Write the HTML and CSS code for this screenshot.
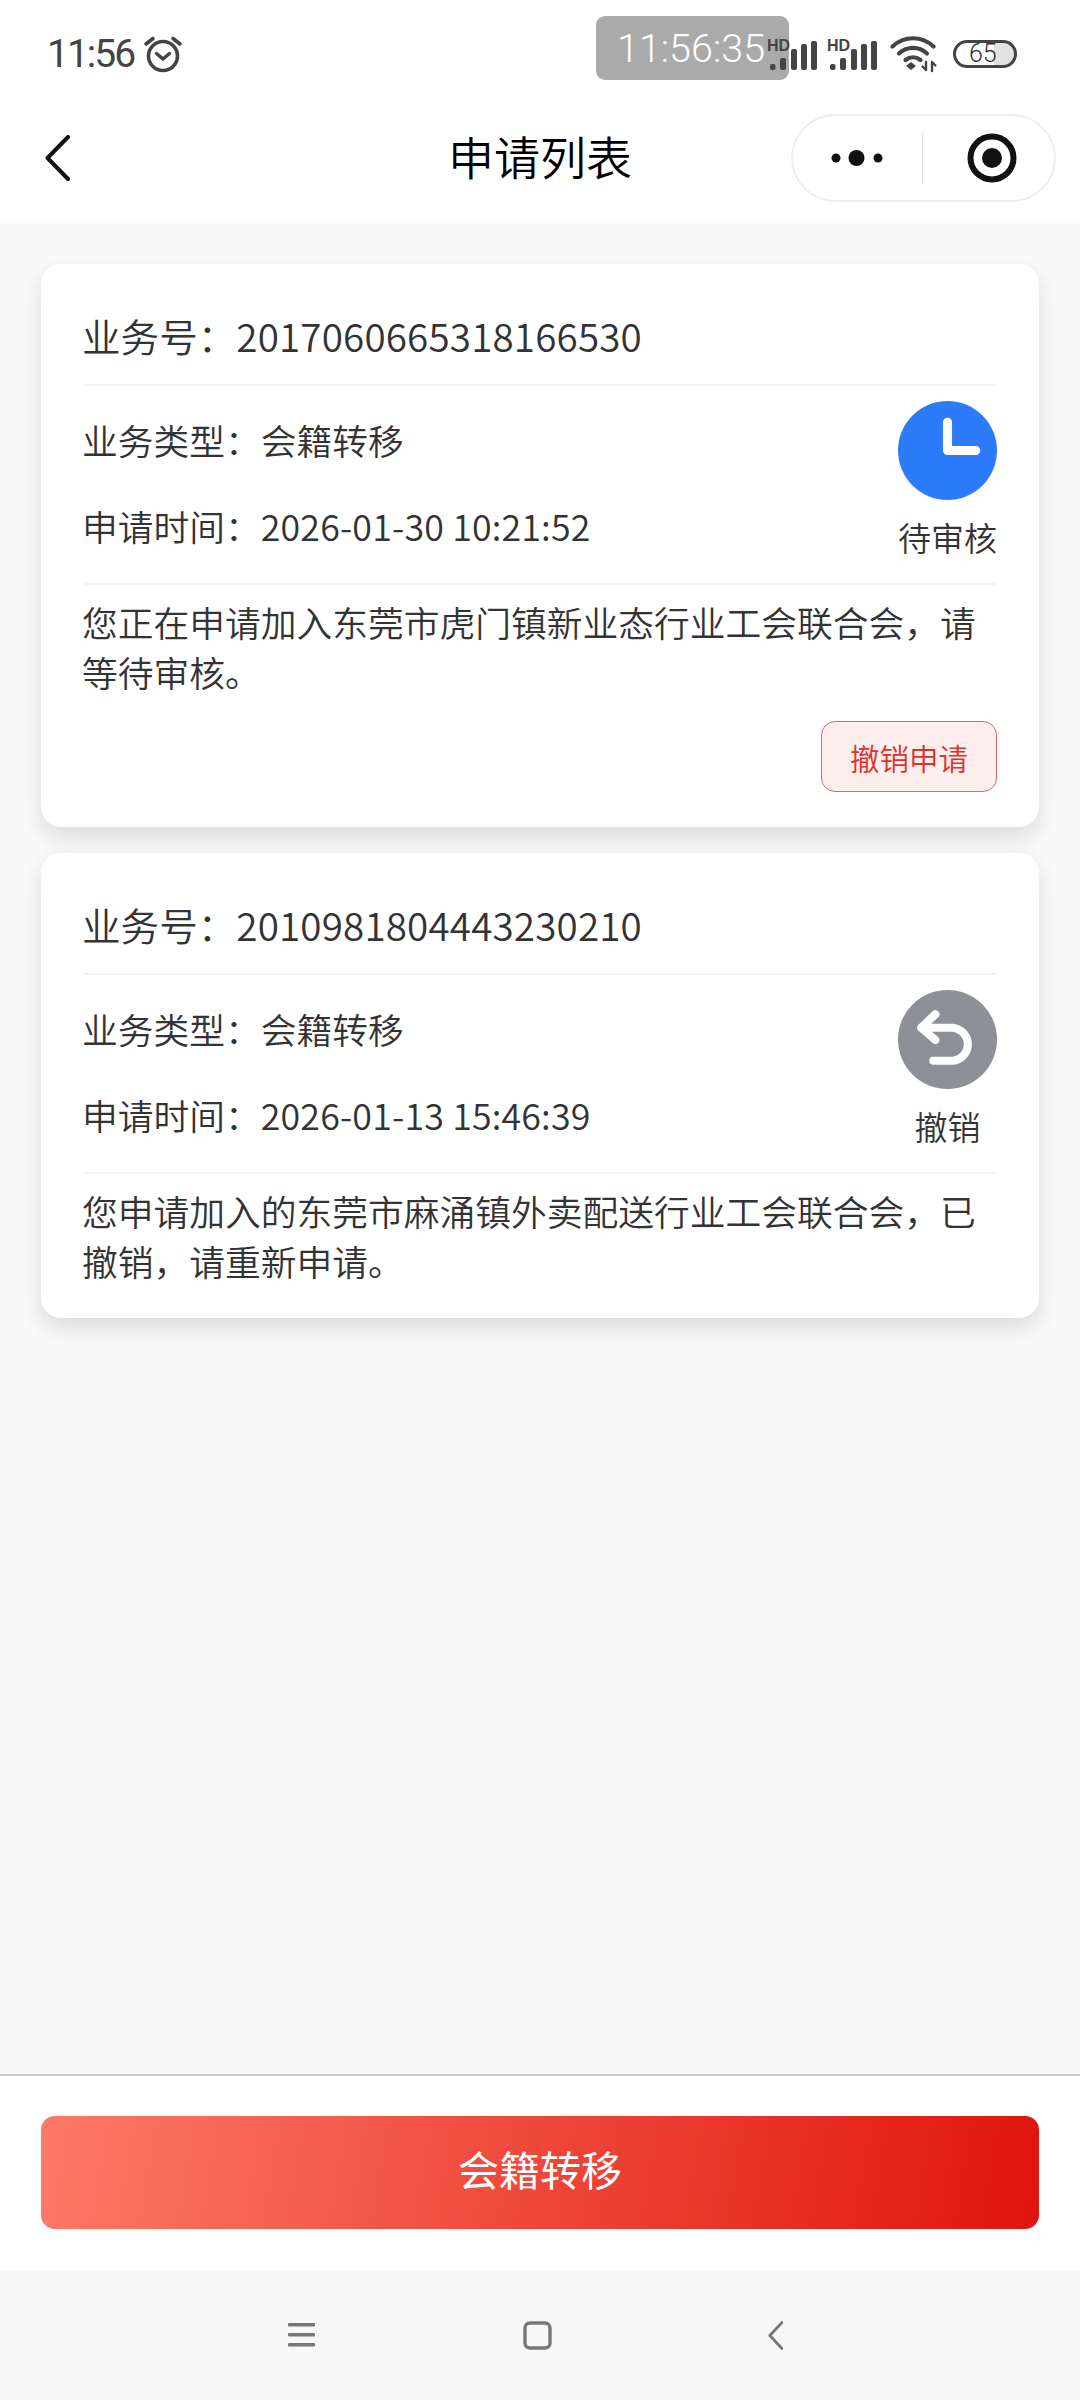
FILE: index.html
```html
<!DOCTYPE html>
<html lang="zh-CN">
<head>
<meta charset="utf-8">
<title>申请列表</title>
<link rel="stylesheet" href="styles.css">
</head>
<body>
<div class="app">
  <header class="top">
    <div class="statusbar">
      <div class="status-left">
        <span class="clock">11:56</span>
        <svg class="alarm" width="40" height="38" viewBox="0 0 40 38" fill="none" stroke="#444" stroke-linecap="round">
          <circle cx="20" cy="21" r="14.5" stroke-width="3.6"/>
          <path d="M13.5 18.5 20 24l6.5-5.500" stroke-width="3.4"/>
          <path d="M3 9 10 3.500M37 9 30 3.500" stroke-width="3.600"/>
        </svg>
      </div>
      <div class="status-right">
        <svg class="signal" width="50" height="34" viewBox="0 0 50 34" fill="#444">
          <text class="hd" x="0" y="14">HD</text>
          <rect x="3" y="27" width="5.500" height="6" rx="2"/>
          <rect x="13" y="21" width="6" height="12" rx="2"/>
          <rect x="24" y="12" width="6" height="21" rx="2"/>
          <rect x="34" y="7" width="6" height="26" rx="2"/>
          <rect x="44" y="4" width="6" height="29" rx="2"/>
        </svg>
        <svg class="signal" width="50" height="34" viewBox="0 0 50 34" fill="#444">
          <text class="hd" x="0" y="14">HD</text>
          <rect x="3" y="27" width="5.500" height="6" rx="2"/>
          <rect x="13" y="21" width="6" height="12" rx="2"/>
          <rect x="24" y="12" width="6" height="21" rx="2"/>
          <rect x="34" y="7" width="6" height="26" rx="2"/>
          <rect x="44" y="4" width="6" height="29" rx="2"/>
        </svg>
        <svg class="wifi" width="48" height="38" viewBox="0 0 48 38" fill="none" stroke="#444" stroke-width="4.200" stroke-linecap="round">
          <path d="M2.500 11.500C14 .5 32 .5 43.500 11.500"/>
          <path d="M9 18.500C17 11 29 11 37 18.500"/>
          <path d="M15.500 25C20 21.500 26 21.500 30.500 25"/>
          <path d="M21 27l-5 4 5 4 5-4z" fill="#444" stroke="none"/>
          <path d="M36 27v8M32.500 31.500l3.500 3.500M42 36v-9M42 27l3.500 3.500" stroke-width="2.400"/>
        </svg>
        <div class="battery"><span class="battery-num">65</span></div>
      </div>
      <div class="recorder">11:56:35</div>
    </div>
    <nav class="navbar">
      <svg class="nav-back" width="25" height="46" viewBox="0 0 25 46" fill="none" stroke="#111" stroke-width="4" stroke-linecap="round" stroke-linejoin="round">
        <path d="M23 2 2.500 23 23 44"/>
      </svg>
      <h1 class="nav-title">申请列表</h1>
      <div class="capsule">
        <svg class="dots" width="52" height="18" viewBox="0 0 52 18" fill="#111">
          <circle cx="5" cy="9" r="4.500"/>
          <circle cx="25.500" cy="9" r="8"/>
          <circle cx="47" cy="9" r="4.500"/>
        </svg>
        <span class="capsule-line"></span>
        <svg class="target" width="50" height="50" viewBox="0 0 50 50" fill="none">
          <circle cx="25" cy="25" r="21.500" stroke="#111" stroke-width="6"/>
          <circle cx="25" cy="25" r="10" fill="#111"/>
        </svg>
      </div>
    </nav>
  </header>

  <main class="list">
    <article class="card">
      <div class="card-title"><span class="card-title-text">业务号：<span class="num">2017060665318166530</span></span></div>
      <div class="card-body">
        <div class="rows">
          <div class="row">业务类型：会籍转移</div>
          <div class="row">申请时间：<span class="num">2026-01-30 10:21:52</span></div>
        </div>
        <div class="state">
          <svg class="state-icon" width="99" height="99" viewBox="0 0 98 98" fill="none">
            <circle cx="49" cy="49" r="49" fill="#2b7bfb"/>
            <path d="M49 21V49H77" stroke="#fff" stroke-width="9" stroke-linecap="round" stroke-linejoin="round"/>
          </svg>
          <span class="state-label">待审核</span>
        </div>
      </div>
      <p class="card-desc">您正在申请加入东莞市虎门镇新业态行业工会联合会，请等待审核。</p>
      <div class="card-actions"><button class="cancel-btn" type="button">撤销申请</button></div>
    </article>

    <article class="card">
      <div class="card-title"><span class="card-title-text">业务号：<span class="num">2010981804443230210</span></span></div>
      <div class="card-body">
        <div class="rows">
          <div class="row">业务类型：会籍转移</div>
          <div class="row">申请时间：<span class="num">2026-01-13 15:46:39</span></div>
        </div>
        <div class="state">
          <svg class="state-icon" width="99" height="99" viewBox="0 0 98 98" fill="none">
            <circle cx="49" cy="49" r="49" fill="#8e9097"/>
            <path d="M37 24 23 37.300 37 49.500M23 37.300H54A16.400 16.400 0 0 1 54 70H35" stroke="#fff" stroke-width="8" stroke-linecap="round" stroke-linejoin="round"/>
          </svg>
          <span class="state-label">撤销</span>
        </div>
      </div>
      <p class="card-desc">您申请加入的东莞市麻涌镇外卖配送行业工会联合会，已撤销，请重新申请。</p>
    </article>
  </main>

  <footer class="footer">
    <button class="primary-btn" type="button">会籍转移</button>
  </footer>

  <div class="sysnav">
    <svg width="27" height="24" viewBox="0 0 27 24" fill="#777">
      <rect y="0" width="27" height="3.500" rx="1"/>
      <rect y="10" width="27" height="3.500" rx="1"/>
      <rect y="20" width="27" height="3.500" rx="1"/>
    </svg>
    <svg class="sys-home" width="29" height="29" viewBox="0 0 29 29" fill="none">
      <rect x="2" y="2" width="25" height="25" rx="5" stroke="#777" stroke-width="3.400"/>
    </svg>
    <svg width="15" height="29" viewBox="0 0 15 29" fill="none">
      <path d="M14 1.500 1.800 14.500 14 27.500" stroke="#777" stroke-width="2.800" stroke-linecap="round" stroke-linejoin="round"/>
    </svg>
  </div>
</div>
</body>
</html>
```

FILE: styles.css
```css
* { box-sizing: border-box; }

html, body { margin: 0; padding: 0; }

body {
  width: 1080px;
  height: 2400px;
  overflow: hidden;
  background: #f9f9f9;
  font-family: "Noto Sans CJK SC", "Noto Sans", sans-serif;
  font-weight: 350;
  color: #333;
}

.app {
  width: 1080px;
  height: 2400px;
  display: flex;
  flex-direction: column;
}

.top { background: #fff; flex: none; }

.statusbar {
  position: relative;
  height: 92px;
  padding: 16px 63px 0 47px;
  display: flex;
  align-items: center;
  justify-content: space-between;
}

.status-left { display: flex; align-items: center; gap: 9px; }

.clock {
  font-family: Roboto, sans-serif;
  font-size: 39px;
  font-weight: 400;
  line-height: 44px;
  letter-spacing: -2px;
  color: #444;
}

.alarm { display: block; }

.status-right {
  position: relative;
  z-index: 1;
  display: flex;
  align-items: center;
}

.signal { display: block; margin-right: 10px; }
.signal + .wifi { margin-left: 3px; margin-right: 15px; }
.wifi { display: block; }

.hd {
  font-family: "Liberation Sans", sans-serif;
  font-weight: 700;
  font-size: 16px;
}

.battery {
  width: 64px;
  height: 28px;
  border: 3px solid #444;
  border-radius: 14px;
  background: linear-gradient(90deg, #fff 65%, #e2e2e2 65%);
  display: flex;
  align-items: center;
  padding-left: 13px;
}

.battery-num {
  font-family: Roboto, sans-serif;
  font-size: 25px;
  font-weight: 300;
  line-height: 22px;
  color: #333;
}

.recorder {
  position: absolute;
  left: 596px;
  top: 16px;
  width: 193px;
  height: 64px;
  padding-left: 21px;
  padding-top: 1px;
  border-radius: 9px;
  background: #aaa;
  color: #fff;
  font-family: Roboto, sans-serif;
  font-weight: 300;
  font-size: 39.500px;
  line-height: 64px;
  white-space: nowrap;
}

.navbar {
  height: 131px;
  padding: 0 24px;
  display: grid;
  grid-template-columns: 1fr auto 1fr;
  align-items: center;
}

.nav-back { display: block; margin-left: 21px; }

.nav-title {
  margin: 0 0 5px;
  font-size: 46px;
  font-weight: 350;
  line-height: 60px;
  color: #000;
}

.capsule {
  justify-self: end;
  width: 265px;
  height: 88px;
  border: 2px solid #eee;
  border-radius: 44px;
  display: flex;
  align-items: center;
  padding-left: 38px;
  background: #fff;
}

.capsule-line {
  width: 1px;
  height: 52px;
  margin: 0 44px 0 39px;
  background: #e8e8e8;
}

.dots, .target { display: block; flex: none; }

.list {
  flex: 1;
  padding: 41px 41px 0;
  display: flex;
  flex-direction: column;
  gap: 26px;
}

.card {
  background: #fff;
  border-radius: 20px;
  padding: 0 43px 32px;
  box-shadow: 0 10px 22px rgba(0, 0, 0, 0.12);
}

.card-title {
  padding: 46px 0 24px;
  font-size: 38.600px;
  line-height: 50px;
  border-bottom: 2px solid #f5f5f5;
}

.card-title-text { display: block; margin-left: -2px; }

.num { letter-spacing: 0.170px; }

.card-body {
  display: flex;
  justify-content: space-between;
  height: 199px;
  border-bottom: 2px solid #f5f5f5;
}

.rows {
  margin-left: -2px;
  padding-top: 29px;
  display: flex;
  flex-direction: column;
  gap: 36px;
}

.row { font-size: 35.750px; line-height: 50px; }

.state {
  width: 99px;
  margin-right: -1px;
  padding-top: 15px;
  display: flex;
  flex-direction: column;
  align-items: center;
}

.state-icon { display: block; flex: none; }

.state-label {
  margin-top: 13px;
  font-size: 33px;
  line-height: 48px;
  white-space: nowrap;
}

.card-desc {
  margin: 12px 0 0 -2px;
  font-size: 35.750px;
  line-height: 50px;
}

.card-actions {
  display: flex;
  justify-content: flex-end;
  margin-top: 24px;
  margin-right: -1px;
  margin-bottom: 3px;
}

.cancel-btn {
  width: 176px;
  height: 71px;
  padding: 0;
  border: 1.500px solid #e06666;
  border-radius: 14px;
  background: #fdeeee;
  color: #e0302c;
  font-family: inherit;
  font-weight: 350;
  font-size: 29.500px;
  line-height: 40px;
}

.footer {
  flex: none;
  height: 196px;
  padding: 40px 41px 0;
  background: #fff;
  border-top: 2px solid #ccc;
}

.primary-btn {
  display: block;
  width: 100%;
  height: 113px;
  border: 0;
  padding: 0 0 9px;
  border-radius: 14px;
  background: linear-gradient(100deg, #fd7a66 0%, #e0140e 100%);
  color: #fff;
  font-family: inherit;
  font-weight: 400;
  font-size: 41px;
  line-height: 56px;
}

.sysnav {
  flex: none;
  height: 130px;
  background: #f7f7f7;
  padding-left: 288px;
  display: flex;
  align-items: center;
  gap: 212px;
}

.sysnav svg { display: block; flex: none; }

.sysnav .sys-home { margin: 0 4px 0 -4px; }
```
